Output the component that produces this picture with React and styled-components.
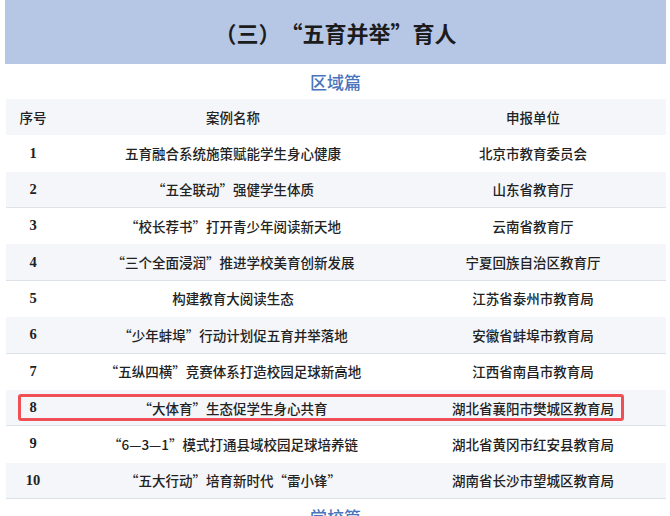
import styled, { createGlobalStyle } from "styled-components";

const rows = [
  ["1", "五育融合系统施策赋能学生身心健康", "北京市教育委员会"],
  ["2", "“五全联动”强健学生体质", "山东省教育厅"],
  ["3", "“校长荐书”打开青少年阅读新天地", "云南省教育厅"],
  ["4", "“三个全面浸润”推进学校美育创新发展", "宁夏回族自治区教育厅"],
  ["5", "构建教育大阅读生态", "江苏省泰州市教育局"],
  ["6", "“少年蚌埠”行动计划促五育并举落地", "安徽省蚌埠市教育局"],
  ["7", "“五纵四横”竞赛体系打造校园足球新高地", "江西省南昌市教育局"],
  ["8", "“大体育”生态促学生身心共育", "湖北省襄阳市樊城区教育局"],
  ["9", "“6—3—1”模式打通县域校园足球培养链", "湖北省黄冈市红安县教育局"],
  ["10", "“五大行动”培育新时代“雷小锋”", "湖南省长沙市望城区教育局"],
];

const App = () => {
  return (
    <Page>
      <GlobalStyle />
      <Banner>（三）“五育并举”育人</Banner>
      <SectionTitle>区域篇</SectionTitle>
      <Table>
        <Row $shade>
          <NumCell>序号</NumCell>
          <Cell>案例名称</Cell>
          <Cell>申报单位</Cell>
        </Row>
        {rows.map(([no, name, unit], i) => (
          <Row key={no} $shade={i % 2 === 1} $line={i % 2 === 1}>
            <NumCell $digits>{no}</NumCell>
            <Cell>{name}</Cell>
            <Cell>{unit}</Cell>
            {no === "8" && <Highlight />}
          </Row>
        ))}
      </Table>
      <SectionTitle>学校篇</SectionTitle>
    </Page>
  );
};

export default App;

const GlobalStyle = createGlobalStyle`
  body {
    margin: 0;
    background: #ffffff;
    font-family: "Noto Sans CJK SC", "Liberation Serif", serif;
    color: #1f1f1f;
  }
`;

const Page = styled.div`
  width: 661px;
  padding: 0 4px 0 5px;
`;

const Banner = styled.div`
  height: 64px;
  display: flex;
  align-items: center;
  justify-content: center;
  background: #b6c7e6;
  font-size: 22px;
  font-weight: 700;
  color: #1c1c1c;
  text-spacing-trim: space-all;
`;

const SectionTitle = styled.div`
  height: 35px;
  display: flex;
  align-items: center;
  justify-content: center;
  font-size: 17px;
  font-weight: 500;
  color: #4a74bc;
`;

const Table = styled.div`
  display: flex;
  flex-direction: column;
  padding-left: 1px;
`;

const Row = styled.div`
  position: relative;
  display: grid;
  grid-template-columns: 54px 346px 254px;
  align-items: center;
  height: 36.36px;
  box-sizing: border-box;
  background: ${(p) => (p.$shade ? "#f4f6fa" : "#ffffff")};
  border-bottom: 1px solid ${(p) => (p.$line ? "#dde1e8" : "transparent")};
`;

const Cell = styled.div`
  text-align: center;
  font-size: 13.5px;
  font-weight: 500;
  color: #222222;
  white-space: nowrap;
`;

const NumCell = styled(Cell)`
  font-family: ${(p) =>
    p.$digits ? '"Liberation Serif", serif' : '"Noto Sans CJK SC", sans-serif'};
  font-size: ${(p) => (p.$digits ? "14.5px" : "13.5px")};
  font-weight: ${(p) => (p.$digits ? 700 : 500)};
`;

const Highlight = styled.div`
  position: absolute;
  left: 12px;
  top: 4px;
  width: 606px;
  height: 27px;
  box-sizing: border-box;
  border: 3px solid #f04f55;
  border-radius: 3px;
  pointer-events: none;
`;
